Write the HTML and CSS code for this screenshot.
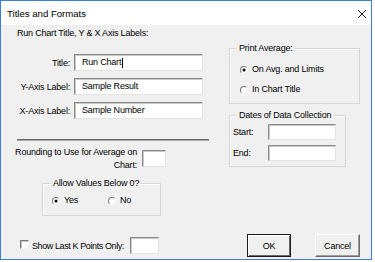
FILE: index.html
```html
<!DOCTYPE html>
<html lang="en">
<head>
<meta charset="UTF-8">
<title>Titles and Formats</title>
<link rel="stylesheet" href="styles.css">
</head>
<body>

<div class="dialog">
    <div class="titlebar">
        <span class="title">Titles and Formats</span>
        <svg class="close" width="10" height="10" viewBox="0 0 10 10">
            <path d="M1 1 L9 9 M9 1 L1 9" stroke="#1a1a1a" stroke-width="1" fill="none"/>
        </svg>
    </div>

    <div class="content">
        <!-- left column: labels and rounding -->
        <div class="left">
            <div class="heading">Run Chart Title, Y &amp; X Axis Labels:</div>
            <div class="fields">
                <div class="field">
                    <span class="label">Title:</span>
                    <div class="textbox wide">Run Chart<span class="caret"></span></div>
                </div>
                <div class="field">
                    <span class="label">Y-Axis Label:</span>
                    <div class="textbox wide">Sample Result</div>
                </div>
                <div class="field">
                    <span class="label">X-Axis Label:</span>
                    <div class="textbox wide">Sample Number</div>
                </div>
            </div>
            <div class="separator"></div>
            <div class="rounding">
                <span class="rounding-label">Rounding to Use for Average on Chart:</span>
                <div class="textbox small"></div>
            </div>
            <fieldset class="group allow">
                <legend>Allow Values Below 0?</legend>
                <div class="radio-row">
                    <label class="radio checked"><span class="dot"></span>Yes</label>
                    <label class="radio"><span class="dot"></span>No</label>
                </div>
            </fieldset>
        </div>

        <!-- right column: groups -->
        <div class="right">
            <fieldset class="group print">
                <legend>Print Average:</legend>
                <label class="radio checked"><span class="dot"></span>On Avg. and Limits</label>
                <label class="radio"><span class="dot"></span>In Chart Title</label>
            </fieldset>
            <fieldset class="group dates">
                <legend>Dates of Data Collection</legend>
                <div class="date-row">
                    <span class="date-label">Start:</span>
                    <div class="textbox date"></div>
                </div>
                <div class="date-row">
                    <span class="date-label">End:</span>
                    <div class="textbox date"></div>
                </div>
            </fieldset>
        </div>

        <div class="bottom">
            <div class="last-k">
                <span class="checkbox"></span>
                <span class="last-k-label">Show Last K Points Only:</span>
                <div class="textbox k"></div>
            </div>
            <div class="buttons">
                <button class="button default">OK</button>
                <button class="button">Cancel</button>
            </div>
        </div>
    </div>
</div>

</body>
</html>
```

FILE: styles.css
```css
body {
    margin: 0;
    padding: 0;
    background-color: #fff;
    font-family: "Liberation Sans", Arial, sans-serif;
    font-size: 9px;
    letter-spacing: -0.2px;
    color: #000;
}
.dialog {
    width: 372px;
    height: 260px;
    box-sizing: border-box;
    border: 1px solid #3b7fd0;
    display: flex;
    flex-direction: column;
}
.titlebar {
    height: 24px;
    background-color: #fff;
    display: flex;
    align-items: center;
    justify-content: space-between;
    padding: 0 4px 0 6px;
    flex-shrink: 0;
}
.title {
    font-size: 9.6px;
    letter-spacing: 0;
}
.close {
    margin-top: 1px;
}
.content {
    flex: 1;
    background-color: #f0f0f0;
    display: grid;
    grid-template-columns: 192px 131px;
    grid-template-rows: auto auto;
    column-gap: 20px;
    padding: 0 0 0 16px;
}
.heading {
    margin-top: 2px;
    line-height: 13px;
}
.fields {
    margin-top: 14px;
    display: flex;
    flex-direction: column;
    gap: 7px;
}
.field {
    display: flex;
    align-items: center;
    gap: 4px;
}
.label {
    width: 53px;
    text-align: right;
}
.textbox {
    box-sizing: border-box;
    height: 17px;
    background-color: #fff;
    border: 1px solid;
    border-color: #8c8c8c #e3e3e3 #e3e3e3 #8c8c8c;
    box-shadow: inset 1px 1px 0 #c8c8c8;
    padding-left: 7px;
    line-height: 15px;
    display: flex;
    align-items: center;
}
.textbox.wide {
    width: 129px;
}
.caret {
    width: 1px;
    height: 10px;
    background-color: #000;
    margin-left: 1px;
}
.separator {
    margin-top: 20px;
    width: 192px;
    height: 0;
    border-top: 1px solid #6a6a6a;
    border-bottom: 1px solid #a8a8a8;
}
.rounding {
    display: flex;
    align-items: flex-start;
    gap: 5px;
    margin-top: 5px;
    margin-left: -3px;
}
.rounding-label {
    width: 123px;
    text-align: right;
    line-height: 13px;
}
.textbox.small {
    width: 24px;
    margin-top: 4px;
}
.group {
    margin: 0;
    border: 1px solid #d5d5d5;
    box-shadow: inset 1px 1px 0 #fff;
    padding: 0 0 0 3px;
    min-width: 0;
}
.group legend {
    padding: 0 2px;
    line-height: 12px;
}
.allow {
    margin: 5px 0 0 25px;
    width: 119px;
    box-sizing: border-box;
    padding: 5px 0 8px 3px;
}
.allow legend {
    margin-left: 5px;
}
.radio-row {
    display: grid;
    grid-template-columns: 56px 56px;
    padding-left: 6px;
}
.radio {
    display: flex;
    align-items: center;
    gap: 4px;
    line-height: 13px;
}
.dot {
    width: 8px;
    height: 8px;
    box-sizing: border-box;
    border-radius: 50%;
    background-color: #fff;
    border: 1px solid;
    border-color: #7a7a7a #f4f4f4 #f4f4f4 #7a7a7a;
    display: flex;
    align-items: center;
    justify-content: center;
}
.checked .dot::after {
    content: "";
    width: 2px;
    height: 2px;
    border-radius: 50%;
    background-color: #000;
    box-shadow: 0 0 0 0.5px #000;
}
.print {
    margin-top: 17px;
    width: 131px;
    box-sizing: border-box;
    padding: 9px 0 7px 3px;
    display: flex;
    flex-direction: column;
    gap: 7px;
}
.print legend {
    margin-left: 4px;
}
.print .radio {
    margin-left: 7px;
}
.dates {
    margin-top: 5px;
    width: 117px;
    box-sizing: border-box;
    padding: 3px 0 5px 3px;
    display: flex;
    flex-direction: column;
    gap: 5px;
}
.dates legend {
    margin-left: 4px;
}
.date-row {
    display: flex;
    align-items: center;
}
.date-label {
    width: 35px;
}
.textbox.date {
    width: 68px;
    height: 16px;
}
.bottom {
    grid-column: 1 / 3;
    display: flex;
    align-items: center;
    justify-content: space-between;
    margin-top: 12px;
}
.last-k {
    display: flex;
    align-items: center;
}
.checkbox {
    width: 9px;
    height: 9px;
    box-sizing: border-box;
    margin-left: 3px;
    margin-top: -3px;
    background-color: #fff;
    border: 1px solid;
    border-color: #7a7a7a #f4f4f4 #f4f4f4 #7a7a7a;
    box-shadow: inset 1px 1px 0 #c0c0c0;
}
.last-k-label {
    width: 92px;
    margin-left: 3px;
    white-space: nowrap;
    letter-spacing: -0.4px;
}
.textbox.k {
    width: 29px;
    margin-left: 6px;
}
.buttons {
    display: flex;
    gap: 24px;
}
.button {
    box-sizing: border-box;
    height: 23px;
    font-family: inherit;
    font-size: 9px;
    letter-spacing: -0.2px;
    background-color: #f0f0f0;
    padding: 0;
    border: 1px solid;
    border-color: #fff #696969 #696969 #fff;
    box-shadow: inset -1px -1px 0 #a0a0a0;
    width: 45px;
}
.button.default {
    width: 44px;
    border-color: #1a1a1a;
    box-shadow: inset 1px 1px 0 #fff, inset -1px -1px 0 #696969;
}
```
